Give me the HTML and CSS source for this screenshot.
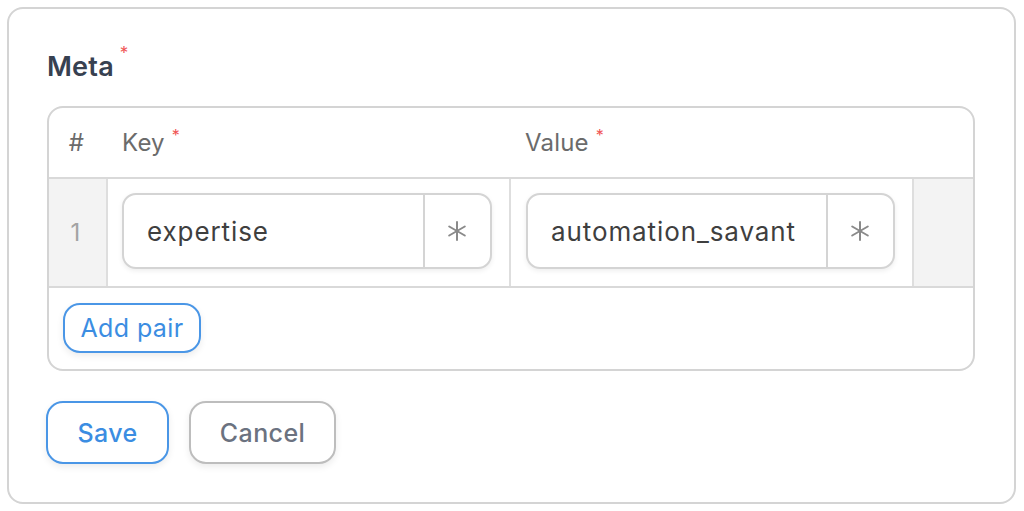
FILE: index.html
```html
<!DOCTYPE html>
<html lang="en">
<head>
<meta charset="utf-8">
<title>Meta</title>
<link rel="stylesheet" href="styles.css">
</head>
<body>
<div class="card">
  <div class="label">Meta<span class="req">*</span></div>
  <div class="kv">
    <div class="kv-head">
      <div class="hcell hnum">#</div>
      <div class="hcell">Key<span class="req req-sm">*</span></div>
      <div class="hcell">Value<span class="req req-sm">*</span></div>
      <div class="hcell"></div>
    </div>
    <div class="kv-row">
      <div class="cell cnum">1</div>
      <div class="cell">
        <div class="input">
          <span class="input-text">expertise</span>
          <span class="suffix"><svg width="20" height="20" viewBox="0 0 20 20"><g stroke="#8a8a8a" stroke-width="2" stroke-linecap="round"><line x1="10" y1="1" x2="10" y2="19"/><line x1="2.2" y1="5.5" x2="17.8" y2="14.5"/><line x1="2.2" y1="14.5" x2="17.8" y2="5.5"/></g></svg></span>
        </div>
      </div>
      <div class="cell">
        <div class="input">
          <span class="input-text">automation_savant</span>
          <span class="suffix"><svg width="20" height="20" viewBox="0 0 20 20"><g stroke="#8a8a8a" stroke-width="2" stroke-linecap="round"><line x1="10" y1="1" x2="10" y2="19"/><line x1="2.2" y1="5.5" x2="17.8" y2="14.5"/><line x1="2.2" y1="14.5" x2="17.8" y2="5.5"/></g></svg></span>
        </div>
      </div>
      <div class="cell cend"></div>
    </div>
    <div class="kv-foot">
      <button class="btn btn-blue btn-sm">Add pair</button>
    </div>
  </div>
  <div class="actions">
    <button class="btn btn-blue btn-save">Save</button>
    <button class="btn btn-gray btn-cancel">Cancel</button>
  </div>
</div>
</body>
</html>
```

FILE: styles.css
```css
* { box-sizing: border-box; }
html, body { margin: 0; padding: 0; background: #fff; }
body {
  font-family: Inter, "Noto Sans", "Liberation Sans", sans-serif;
  padding: 7px 8px 8px 7px;
}
.card {
  width: 1009px;
  height: 497px;
  border: 2px solid #d4d4d4;
  border-radius: 16px;
  padding: 38px 39px 38px 38px;
}
.label {
  font-size: 27px;
  line-height: 40px;
  font-weight: 600;
  letter-spacing: 0.2px;
  color: #374151;
  margin-bottom: 19px;
}
.req {
  color: #f05454;
  font-weight: 400;
  font-size: 17px;
  vertical-align: top;
  line-height: 17px;
  margin-left: 6px;
  position: relative;
  top: -2px;
}
.req-sm { font-size: 16px; margin-left: 7px; top: 16px; }
.kv {
  border: 2px solid #d4d4d4;
  border-radius: 16px;
  overflow: hidden;
}
.kv-head, .kv-row {
  display: grid;
  grid-template-columns: 59px 403px 403px 59px;
}
.kv-head {
  height: 71px;
  border-bottom: 2px solid #d9d9d9;
}
.hcell {
  display: flex;
  align-items: center;
  padding-left: 14px;
  font-size: 24px;
  letter-spacing: 0.2px;
  color: #6b6b6b;
  position: relative;
}
.hcell .req { position: static; align-self: flex-start; margin-top: 19px; }
.hnum { justify-content: center; padding-left: 0; padding-right: 4px; }
.kv-row {
  height: 109px;
  border-bottom: 2px solid #d9d9d9;
}
.cell {
  border-right: 2px solid #dedede;
  padding: 14px 17px 17px 14px;
}
.cnum, .cend { background: #f3f3f3; }
.cend { border-right: 0; }
.cnum {
  display: flex;
  align-items: center;
  justify-content: center;
  padding: 0 4px 0 0;
  font-size: 24px;
  color: #a3a3a3;
}
.cell:nth-child(3) { padding-left: 15px; }
.input {
  display: flex;
  height: 76px;
  border: 2px solid #d4d4d4;
  border-radius: 14px;
  box-shadow: 0 2px 5px rgba(0,0,0,0.07);
  background: #fff;
}
.input-text {
  flex: 1;
  display: flex;
  align-items: center;
  padding-left: 23px;
  font-size: 26px;
  letter-spacing: 0.9px;
  color: #3f3f3f;
  white-space: nowrap;
  overflow: hidden;
}
.suffix {
  width: 67px;
  border-left: 2px solid #d4d4d4;
  display: flex;
  align-items: center;
  justify-content: center;
  padding-right: 2px;
}
.kv-foot {
  padding: 15px 16px 16px 14px;
}
.btn {
  font-family: inherit;
  background: #fff;
  cursor: pointer;
  box-shadow: 0 3px 7px rgba(0,0,0,0.08);
  padding: 0;
  letter-spacing: 0.4px;
}
.btn-blue { border: 2px solid #4a96e6; color: #3b8de2; }
.btn-gray { border: 2px solid #bdbdbd; color: #6b7280; }
.btn-sm {
  width: 138px;
  height: 50px;
  border-radius: 17px;
  font-size: 25px;
}
.actions {
  display: flex;
  gap: 20px;
  margin-top: 30px;
  margin-left: -1px;
}
.btn-save, .btn-cancel {
  height: 63px;
  border-radius: 17px;
  font-size: 25px;
  font-weight: 500;
}
.btn-save { width: 123px; }
.btn-cancel { width: 147px; }
```
